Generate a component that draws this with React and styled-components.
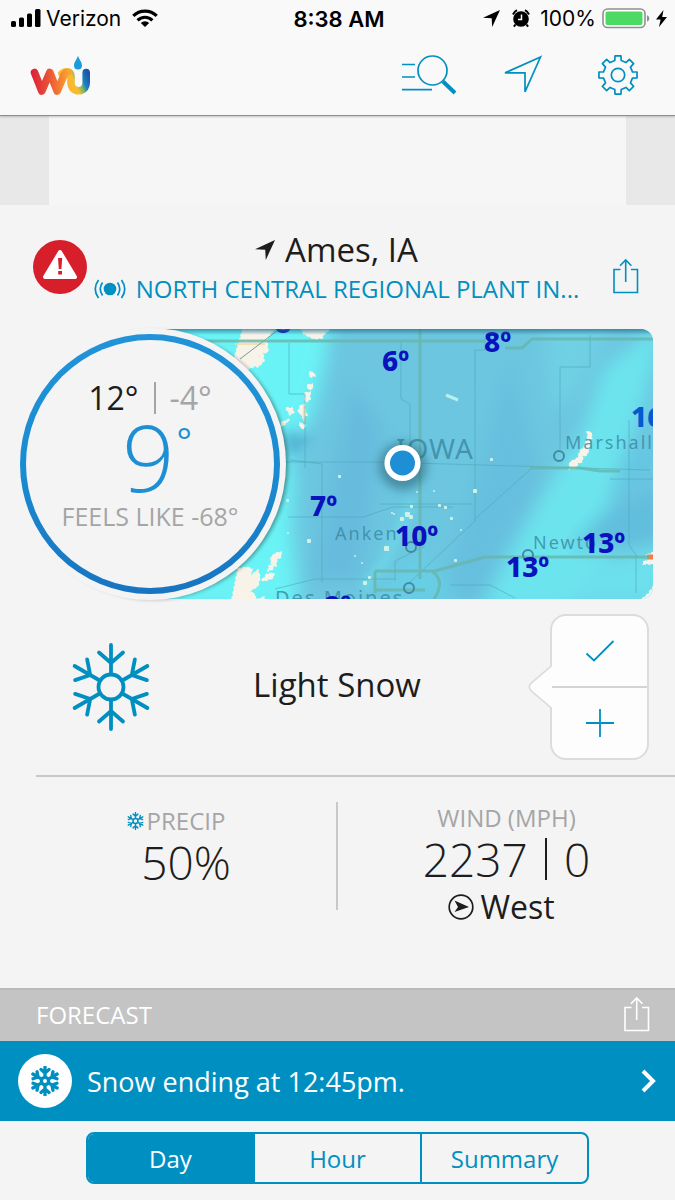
import React, { useState } from 'react';
import styled, { createGlobalStyle } from 'styled-components';

const colors = {
    bar: '#f9f9f9',
    background: '#f4f4f4',
    adSide: '#e8e8e8',
    blue: '#008fc1',
    dial: '#1e8fd5',
    text: '#1d1d20',
    muted: '#a5a5a5',
    line: '#c8c8c8',
    forecast: '#c4c4c4',
    alert: '#d71f2b',
};

const GlobalStyle = createGlobalStyle`
    * {
        box-sizing: border-box;
    }

    body {
        margin: 0;
        background-color: ${colors.background};
        color: ${colors.text};
        font-family: 'Open Sans', 'Noto Sans', sans-serif;
        font-weight: 400;
    }

    button {
        padding: 0;
        border: none;
        background: none;
        color: inherit;
        font: inherit;
        cursor: pointer;
    }

    svg {
        display: block;
        flex-shrink: 0;
    }
`;

const TopBar = styled.header`
    background-color: ${colors.bar};
    border-bottom: 1px solid #8e8e8e;
    box-shadow: 0 1px 2px rgba(0, 0, 0, 0.2);
    position: relative;
`;

const StatusBar = styled.div`
    display: grid;
    grid-template-columns: 1fr auto 1fr;
    align-items: center;
    height: 37px;
    padding: 0 8px 0 11px;
    color: #000;
    font-family: Inter, 'Liberation Sans', sans-serif;
    font-size: 21px;
`;

const StatusGroup = styled.div`
    display: flex;
    align-items: center;
    justify-content: ${({ $end }) => ($end ? 'flex-end' : 'flex-start')};
    gap: ${({ $end }) => ($end ? '6px' : '11px')};
`;

const StatusIcons = styled.span`
    display: flex;
    align-items: center;
    gap: 12px;
    padding-right: 4px;
`;

const Carrier = styled.span`
    margin-left: -6px;
`;

const Clock = styled.time`
    font-size: 22px;
    font-weight: 600;
`;

const NavBar = styled.nav`
    display: flex;
    align-items: center;
    justify-content: space-between;
    height: 78px;
    padding: 0 36px 2px 30px;
`;

const NavActions = styled.div`
    display: flex;
    align-items: center;
    gap: 46px;
`;

const NavButton = styled.button`
    padding-left: ${({ $spaced }) => ($spaced ? '8px' : '0')};
`;

const AdSlot = styled.div`
    height: 89px;
    border: solid ${colors.adSide};
    border-width: 0 49px;
    background-color: #f6f6f6;
`;

const Location = styled.section`
    display: flex;
    align-items: center;
    height: 123px;
    padding: 0 36px 0 33px;
`;

const LocationText = styled.div`
    flex: 1;
    min-width: 0;
    display: flex;
    flex-direction: column;
    align-items: center;
    gap: 5px;
    padding: 0 35px 0 9px;
`;

const City = styled.h1`
    display: flex;
    align-items: center;
    gap: 10px;
    margin: 0;
    font-size: 33px;
    font-weight: 400;
    line-height: 40px;
`;

const Station = styled.a`
    display: flex;
    align-items: center;
    gap: 10px;
    color: ${colors.blue};
    font-size: 24px;
    line-height: 28px;
    text-decoration: none;
    white-space: nowrap;
`;

const ShareButton = styled.button`
    padding-top: ${({ $low }) => ($low ? '18px' : '0')};
    color: ${({ $color }) => $color};
`;

const Hero = styled.section`
    display: flex;
    align-items: center;
    padding: 0 22px 0 14px;
`;

const Dial = styled.div`
    position: relative;
    z-index: 1;
    flex: 0 0 272px;
    height: 272px;
    margin-right: -136px;
    padding: 6px;
    border-radius: 50%;
    background-color: ${colors.background};
    box-shadow: 4px 1px 4px -2px rgba(0, 0, 0, 0.4);
`;

const DialRing = styled.div`
    display: flex;
    flex-direction: column;
    align-items: center;
    height: 100%;
    padding-top: 42px;
    border: 6px solid transparent;
    border-radius: 50%;
    background:
        linear-gradient(${colors.background}, ${colors.background}) padding-box,
        linear-gradient(#2193d9, #1a8dd2 50%, #1874c0) border-box;
`;

const HighLow = styled.div`
    display: flex;
    align-items: center;
    color: ${colors.muted};
    font-size: 32px;
    line-height: 32px;
`;

const High = styled.span`
    padding-right: 15px;
    border-right: 2px solid ${colors.muted};
    color: ${colors.text};
`;

const Low = styled.span`
    padding-left: 14px;
`;

const Temperature = styled.div`
    display: flex;
    color: ${colors.dial};
    font-size: 92px;
    font-weight: 300;
    line-height: 86px;
`;

const Degree = styled.sup`
    margin-right: -14px;
    padding-left: 2px;
    font-size: 36px;
    font-weight: 400;
    line-height: 54px;
`;

const FeelsLike = styled.div`
    color: ${colors.muted};
    font-size: 25px;
    line-height: 32px;
`;

const MapLink = styled.a`
    flex: 1;
    height: 270px;
    overflow: hidden;
    border-radius: 0 12px 12px 0;

    svg {
        width: 100%;
        height: 100%;
    }
`;

const Conditions = styled.section`
    display: flex;
    align-items: center;
    padding: 14px 26px 15px 70px;
`;

const Phrase = styled.h2`
    flex: 1;
    margin: 0;
    padding: 0 6px 6px 0;
    font-size: 33px;
    font-weight: 400;
    text-align: center;
`;

const Vote = styled.div`
    display: flex;
    align-items: center;
`;

const VoteBox = styled.div`
    display: flex;
    flex-direction: column;
    width: 99px;
    height: 146px;
    margin-left: -2px;
    border: 2px solid #dcdcdc;
    border-radius: 16px;
    background-color: #fdfdfd;
`;

const VoteButton = styled.button`
    display: flex;
    flex: 1;
    align-items: center;
    justify-content: center;
    color: ${colors.blue};

    & + & {
        border-top: 2px solid #d4d4d4;
    }
`;

const PointerSvg = styled.svg`
    position: relative;
    z-index: 1;
`;

const Details = styled.section`
    display: grid;
    grid-template-columns: 302px 1fr;
    margin-left: 36px;
    padding: 25px 0 61px;
    border-top: 2px solid ${colors.line};
`;

const Detail = styled.div`
    display: flex;
    flex-direction: column;
    align-items: center;
    height: 125px;
`;

const DetailDivided = styled(Detail)`
    height: 108px;
    padding-top: 3px;
    border-right: 2px solid ${colors.line};
`;

const DetailLabel = styled.div`
    display: flex;
    align-items: center;
    gap: 3px;
    margin-right: ${({ $icon }) => ($icon ? '20px' : '0')};
    color: ${colors.muted};
    font-size: 24px;
    line-height: 32px;

    svg {
        color: ${colors.blue};
    }
`;

const DetailValue = styled.div`
    display: flex;
    align-items: center;
    gap: 17px;
    font-size: 46px;
    font-weight: 300;
    line-height: 50px;
`;

const ValueDivider = styled.span`
    width: 2px;
    height: 42px;
    background-color: ${colors.text};
`;

const WindDirection = styled.div`
    display: flex;
    align-items: center;
    gap: 6px;
    margin-right: 10px;
    font-size: 32px;
    line-height: 46px;
`;

const ForecastBar = styled.section`
    display: flex;
    align-items: center;
    justify-content: space-between;
    height: 53px;
    padding: 0 25px 3px 36px;
    border-top: 2px solid #b9b9b9;
    background-color: ${colors.forecast};
    color: #fff;
`;

const ForecastTitle = styled.h2`
    margin: 0;
    font-size: 24px;
    font-weight: 400;
`;

const SnowNotice = styled.a`
    display: flex;
    align-items: center;
    gap: 15px;
    height: 80px;
    padding: 0 19px 0 18px;
    background-color: ${colors.blue};
    color: #fff;
    font-size: 27px;
    text-decoration: none;
`;

const NoticeIcon = styled.span`
    display: flex;
    align-items: center;
    justify-content: center;
    width: 54px;
    height: 54px;
    border-radius: 50%;
    background-color: #fff;
    color: ${colors.blue};
`;

const NoticeText = styled.span`
    flex: 1;
`;

const Tabs = styled.div`
    display: flex;
    margin: 11px 86px 16px;
    border: 2px solid ${colors.blue};
    border-radius: 8px;
    overflow: hidden;
`;

const Tab = styled.button`
    flex: 1;
    height: 48px;
    background-color: ${({ $active }) => ($active ? colors.blue : 'transparent')};
    color: ${({ $active }) => ($active ? '#fff' : colors.blue)};
    font-size: 24px;

    & + & {
        border-left: 2px solid ${colors.blue};
    }
`;

const SignalIcon = () => (
    <svg width="30" height="19" viewBox="0 0 30 19">
        <rect x="0" y="12" width="5" height="6" rx="1.5" />
        <rect x="8" y="8.500" width="5" height="9.500" rx="1.500" />
        <rect x="16" y="4.500" width="5" height="13.500" rx="1.500" />
        <rect x="24" y="0" width="5.500" height="18" rx="1.500" />
    </svg>
);

const WifiIcon = () => (
    <svg width="26" height="19" viewBox="0 0 26 19" fill="none" stroke="#000" strokeWidth="3.200">
        <path d="M1.300 6.900a16.600 16.600 0 0 1 23.400 0" />
        <path d="M5.600 11.300a10.500 10.500 0 0 1 14.800 0" />
        <path d="M13 18l-4.200-4.100a6 6 0 0 1 8.400 0z" fill="#000" stroke="none" />
    </svg>
);

const LocationArrow = ({ size = 17 }) => (
    <svg width={size} height={size} viewBox="0 0 18 18" fill="currentColor">
        <path d="M18 0L0 8.300l9.200.5L9.700 18z" />
    </svg>
);

const AlarmIcon = () => (
    <svg width="18" height="19" viewBox="0 0 18 19">
        <circle cx="9" cy="10" r="7.800" />
        <path d="M1 5.500A9 9 0 0 1 5 1.200M13 1.200a9 9 0 0 1 4 4.300M3.500 15.500l-1.600 2.200M14.500 15.500l1.600 2.200" stroke="#000" strokeWidth="2" fill="none" />
        <path d="M9.500 5.500v5H6" stroke="#fff" strokeWidth="1.500" fill="none" />
    </svg>
);

const BatteryIcon = () => (
    <svg width="48" height="21" viewBox="0 0 48 21">
        <rect x="1" y="1" width="42" height="18.500" rx="4.500" fill="#fff" stroke="#8f8f8f" strokeWidth="1.600" />
        <rect x="3.500" y="3.500" width="37" height="13.500" rx="2" fill="#4cd964" />
        <path d="M45 7.200c3 1 3 5.400 0 6.400z" fill="#8f8f8f" />
    </svg>
);

const BoltIcon = () => (
    <svg width="11" height="17" viewBox="0 0 11 17">
        <path d="M7.500 0L0 9.500h4.600L3 17l8-10H6.200z" />
    </svg>
);

const LogoIcon = () => (
    <svg width="60" height="42" viewBox="30 50 60 42" role="img" aria-label="Weather Underground">
        <defs>
            <linearGradient id="warm" gradientUnits="userSpaceOnUse" x1="31" y1="0" x2="68" y2="0">
                <stop offset="0" stopColor="#d9203a" />
                <stop offset="0.450" stopColor="#e94f35" />
                <stop offset="0.800" stopColor="#f58232" />
                <stop offset="1" stopColor="#f9a52f" />
            </linearGradient>
            <linearGradient id="cool" gradientUnits="userSpaceOnUse" x1="66" y1="80" x2="88" y2="70">
                <stop offset="0" stopColor="#fbb52f" />
                <stop offset="0.350" stopColor="#f3bd30" />
                <stop offset="0.550" stopColor="#7fb560" />
                <stop offset="0.700" stopColor="#1c83c5" />
                <stop offset="1" stopColor="#1c57a8" />
            </linearGradient>
        </defs>
        <g fill="none" strokeWidth="7.600" strokeLinecap="round" strokeLinejoin="round">
            <path d="M62 69.500C67 66 71 68 71 73v5.500c0 11 15.200 11 15.200 0V68.500" stroke="url(#cool)" />
            <path d="M34.500 68.500l7.300 18.500 8-18.500 7.400 18.500 6.300-14.500c1-2.500 2-4 4-4.200" stroke="url(#warm)" />
        </g>
        <path d="M78 51.500c1 4 4 6.500 4 10a4 4 0 0 1-8 0c0-3.500 3-6 4-10z" fill="#1b9dd9" />
    </svg>
);

const SearchIcon = () => (
    <svg width="55" height="42" viewBox="0 0 55 42" fill="none" stroke={colors.blue} strokeWidth="1.700">
        <path d="M0 10.500h13M0 23h13M0 35.700h30" />
        <circle cx="30.500" cy="16.500" r="14.500" />
        <path d="M41 27.500l12 11.500" strokeWidth="4" />
    </svg>
);

const NavigateIcon = () => (
    <svg width="40" height="40" viewBox="0 0 40 40" fill="none" stroke={colors.blue} strokeWidth="1.700">
        <path d="M37.500 2L2 17.800h20v19z" />
    </svg>
);

const GearIcon = () => {
    const teeth = [];
    for (let i = 0; i < 8; i += 1) {
        [[-12.500, 14.800], [-9, 19.300], [9, 19.300], [12.500, 14.800]].forEach(([deg, r]) => {
            const angle = ((i * 45 + deg) * Math.PI) / 180;
            teeth.push(`${(21 + r * Math.sin(angle)).toFixed(2)},${(21 - r * Math.cos(angle)).toFixed(2)}`);
        });
    }
    return (
        <svg width="42" height="42" viewBox="0 0 42 42" fill="none" stroke={colors.blue} strokeWidth="1.700" strokeLinejoin="round">
            <polygon points={teeth.join(' ')} />
            <circle cx="21" cy="21" r="6.700" />
        </svg>
    );
};

const AlertIcon = () => (
    <svg width="54" height="54" viewBox="0 0 54 54">
        <circle cx="27" cy="27" r="27" fill={colors.alert} />
        <path d="M27 12l15 25H12z" fill="#fff" stroke="#fff" strokeWidth="4" strokeLinejoin="round" />
        <path d="M25 18h4.200l-.8 11h-2.600zM25.200 31h3.800v3.500h-3.800z" fill={colors.alert} />
    </svg>
);

const BroadcastIcon = () => (
    <svg width="32" height="20" viewBox="0 0 32 20" fill="none" stroke="currentColor" strokeWidth="1.700">
        <circle cx="16" cy="10" r="6.300" fill="currentColor" stroke="none" />
        <path d="M8.500 3.500q-4.500 6.500 0 13M4.500 1q-6.500 9 0 18M23.500 3.500q4.500 6.500 0 13M27.500 1q6.500 9 0 18" />
    </svg>
);

const ShareIcon = () => (
    <svg width="27" height="36" viewBox="0 0 27 36" fill="none" stroke="currentColor" strokeWidth="1.600">
        <path d="M8.500 11.500H2v23h23.500v-23H19M13.700 24V2M8 7.700L13.700 2l5.700 5.700" />
    </svg>
);

const Snowflake = ({ width, height, stroke = 3.800, hub = 12.500 }) => (
    <svg width={width} height={height} viewBox="-41 -45 82 90" fill="none" stroke="currentColor" strokeWidth={stroke} strokeLinecap="round">
        <circle r={hub} />
        {[0, 60, 120, 180, 240, 300].map((deg) => (
            <path key={deg} d="M0-13V-42M-12-34.500L0-24l12-10.500" transform={`rotate(${deg})`} />
        ))}
    </svg>
);

const ConditionIcon = styled.div`
    color: ${colors.blue};
`;

const WestIcon = () => (
    <svg width="26" height="26" viewBox="0 0 26 26">
        <circle cx="13" cy="13" r="11.800" fill="none" stroke={colors.text} strokeWidth="1.700" />
        <path d="M6.500 6.500L21 13 6.500 18l3.500-5z" fill={colors.text} />
    </svg>
);

const counties = `M289 343v51h16v74M150 462h230l270 8M322 464v118M288 517h75l30-10h60M401 341v58l9 5v57M475
    367v-17h10v-12M475 367v152M560 449v-82h30v-32M380 504h92M476 520l-66 62M474 520l58-52M629 420v125l7 10v38M610
    479h45M275 589l40-10h80M450 585h40l25 13M290 460l32 4M395 581v-20l30-15`;

const roads = `M150 341h335M505 348h17l10-9h121M420 329v250M375 571v22M375 571h60l50-14h165M432 571q14 10 2 28M375
    590h50M530 468h50l20 3h20`;

const snowPatches = [
    'M243 329l30 1-6 9 1 13-5 1 1 8-6 6-3-1-7 3-6 6-3 1-6-14z',
    'M301 329h29l-6 5-2 4-7 1-5-2-6-3z',
    'M232 599l6-30 9-2 5 2-1 7 4-4 3-2 2 7-2 9-8 5 5 4 1 5 8-3 3 7z',
    'M262 580l5-6 7-1-1 5-9 3zM276 553l5-1v5l-4 2-1 7-5-3v-6zM269 566l5-2-1 5-5 2z',
    'M310 372l4 1 1 3-4 1-2-2zM307 385l5-1 1 4-4 2zM305 393l5-1v8l-5 2zM300 406l5-2 0 6 2 5-4 3-2-4-3-2zM286 408l6 0 2 4-4 3zM282 422l8-3-6 6-4 2zM300 423l5 2-1 4-4-2z',
    'M587 432l4 0 1 6-3 1 1 7-3 9-4 1-1 6-4 1-2 5-7 1 1-7 8-4 2-7 4-4 2-5 2-6z',
    'M654 552l-7 3 1 5-5 2 0 2h12zM642 599l6-5 5-7v12z',
];

const specks = [
    [338, 475, 3], [286, 499, 3], [287, 532, 2], [307, 539, 4], [384, 546, 5], [354, 555, 2], [361, 562, 2],
    [393, 513, 2], [400, 517, 4], [405, 512, 5], [409, 515, 4], [410, 505, 3], [433, 490, 2], [416, 491, 2],
    [438, 504, 3], [444, 506, 3], [450, 517, 3], [460, 529, 2], [473, 489, 4], [490, 458, 3], [454, 559, 3],
    [363, 581, 4], [368, 576, 3], [391, 512, 2],
];

const places = [
    { name: 'IOWA', x: 396, y: 459, size: 28, spacing: 1 },
    { name: 'Marshallt', x: 565, y: 449, size: 18, spacing: 2 },
    { name: 'Anken', x: 335, y: 540, size: 18, spacing: 2 },
    { name: 'Newto', x: 533, y: 549, size: 18, spacing: 2 },
    { name: 'Des Moines', x: 275, y: 605, size: 20, spacing: 2 },
];

const readings = [
    { value: '6º', x: 382, y: 371 },
    { value: '8º', x: 484, y: 352 },
    { value: '7º', x: 310, y: 516 },
    { value: '10º', x: 395, y: 546 },
    { value: '13º', x: 506, y: 577 },
    { value: '13º', x: 582, y: 553 },
    { value: '16º', x: 631, y: 427, color: '#055ad2' },
    { value: '8º', x: 275, y: 333 },
    { value: '8º', x: 324, y: 616 },
];

const RadarMap = () => (
    <svg viewBox="150 329 503 270" preserveAspectRatio="xMidYMid slice">
        <defs>
            <filter id="soft" x="-50%" y="-50%" width="200%" height="200%">
                <feGaussianBlur stdDeviation="9" />
            </filter>
            <filter id="halo" x="-50%" y="-50%" width="200%" height="200%">
                <feGaussianBlur stdDeviation="5" />
            </filter>
            <linearGradient id="topShade" x1="0" y1="0" x2="0" y2="1">
                <stop offset="0" stopColor="#20708e" stopOpacity="0.700" />
                <stop offset="1" stopColor="#20708e" stopOpacity="0" />
            </linearGradient>
        </defs>
        <rect x="150" y="329" width="503" height="270" fill="#6cc6e0" />
        <g filter="url(#soft)">
            <path d="M130 300h202l-6 60-12 50-18 40-4 80 8 80H130z" fill="#6af3f6" />
            <path d="M283 425h16l-2 40-8 10z" fill="#62b9df" opacity="0.500" />
            <path d="M665 320l-62 50-20 60-25 40-52 90-25 50h95l35-60 0-60 30-80z" fill="#6ce4ee" />
            <path d="M665 420l-45 40-12 40 57-30z" fill="#66c6e2" />
            <path d="M665 485l-60 25-35 40 95-10z" fill="#62bedd" />
            <path d="M665 545l-70 20-30 40h100z" fill="#6ce0ed" />
            <path d="M510 360l-25 90-45 150h40l60-120z" fill="#66bfde" />
            <path d="M545 320h70l-40 75-25 15z" fill="#70d0e4" />
            <path d="M350 380l-40 200h50l25-150z" fill="#66bcdd" />
            <path d="M420 550l-50 50h90z" fill="#66cfe6" />
        </g>
        <path d="M285 435l8-4 6 7 9-3 5 6-10 4-7 9-8-2z" fill="#489fc4" opacity="0.600" filter="url(#halo)" />
        <path d="M412 500l-12 30-18 35-20 25" stroke="#70e9ef" strokeWidth="7" fill="none" opacity="0.600" filter="url(#halo)" />
        <g fill="#f8f3e9">
            {snowPatches.map((d) => (
                <path key={d} d={d} stroke="#f8f3e9" strokeWidth="1.500" strokeDasharray="3 2" />
            ))}
        </g>
        <path d="M446 395l12 5" stroke="#b7f1ee" strokeWidth="3" />
        <path d="M235 341h32M235 344h30M304 405v16" stroke="#f4d79d" strokeWidth="1.500" />
        <path d="M647 557h6" stroke="#f17e44" strokeWidth="5" />
        <path d="M240 359l42-32" stroke="#7f9899" strokeWidth="1" />
        <path d={counties} fill="none" stroke="#4ca8b8" strokeWidth="1" opacity="0.600" />
        <path d={roads} fill="none" stroke="#66b5ab" strokeWidth="3" opacity="0.800" />
        <g fill="#cff2e8">
            {specks.map(([x, y, size]) => (
                <rect key={`${x}-${y}`} x={x} y={y} width={size} height={size} rx="1" />
            ))}
        </g>
        <g fill="none" stroke="#4589a1" strokeWidth="2">
            <circle cx="559" cy="456" r="5" />
            <circle cx="528" cy="555" r="5" />
            <circle cx="411" cy="547" r="5" />
            <circle cx="409" cy="588" r="5" />
        </g>
        <g fill="#3a86a2" fillOpacity="0.800" fontFamily="'Noto Sans', sans-serif">
            {places.map(({ name, x, y, size, spacing }) => (
                <text key={name} x={x} y={y} fontSize={size} letterSpacing={spacing}>{name}</text>
            ))}
        </g>
        <g fontFamily="'Noto Sans', sans-serif" fontSize="28" fontWeight="800">
            {readings.map(({ value, x, y, color = '#0a12bd' }) => (
                <text key={`${x}-${y}`} x={x} y={y} fill={color}>{value}</text>
            ))}
        </g>
        <circle cx="403" cy="466" r="24" fill="#24566b" opacity="0.500" filter="url(#halo)" />
        <circle cx="402.500" cy="463" r="15.300" fill={colors.dial} stroke="#fff" strokeWidth="5.600" />
        <rect x="150" y="329" width="503" height="6" fill="url(#topShade)" />
    </svg>
);

const PointerIcon = () => (
    <PointerSvg width="24" height="46" viewBox="0 0 24 46">
        <path d="M24 1.500L3.500 18.800q-4.500 4.200 0 8.400L24 44.500" fill="#fdfdfd" stroke="#dcdcdc" strokeWidth="1.700" />
    </PointerSvg>
);

const CheckIcon = () => (
    <svg width="30" height="24" viewBox="0 0 30 24" fill="none" stroke="currentColor" strokeWidth="1.800">
        <path d="M1.500 14.500l7.500 7L28.500 2" />
    </svg>
);

const PlusIcon = () => (
    <svg width="30" height="30" viewBox="0 0 30 30" stroke="currentColor" strokeWidth="1.800">
        <path d="M15 1v28M1 15h28" />
    </svg>
);

const ChevronIcon = () => (
    <svg width="15" height="24" viewBox="0 0 15 24" fill="none" stroke="currentColor" strokeWidth="4">
        <path d="M2 2l10 10L2 22" />
    </svg>
);

const tabs = ['Day', 'Hour', 'Summary'];

/**
 * Current conditions screen with the forecast switcher.
 *
 * @returns {JSX.Element} The weather screen.
 */
const App = () => {
    const [activeTab, setActiveTab] = useState('Day');

    return (
        <>
            <GlobalStyle />
            <TopBar>
                <StatusBar>
                    <StatusGroup>
                        <SignalIcon />
                        <Carrier>Verizon</Carrier>
                        <WifiIcon />
                    </StatusGroup>
                    <Clock>8:38 AM</Clock>
                    <StatusGroup $end>
                        <StatusIcons>
                            <LocationArrow />
                            <AlarmIcon />
                        </StatusIcons>
                        <span>100%</span>
                        <BatteryIcon />
                        <BoltIcon />
                    </StatusGroup>
                </StatusBar>
                <NavBar>
                    <LogoIcon />
                    <NavActions>
                        <NavButton type="button" aria-label="Search"><SearchIcon /></NavButton>
                        <NavButton type="button" aria-label="Locate me"><NavigateIcon /></NavButton>
                        <NavButton type="button" aria-label="Settings" $spaced><GearIcon /></NavButton>
                    </NavActions>
                </NavBar>
            </TopBar>

            <AdSlot />

            <main>
                <Location>
                    <button type="button" aria-label="Weather alert"><AlertIcon /></button>
                    <LocationText>
                        <City>
                            <LocationArrow size={20} />
                            Ames, IA
                        </City>
                        <Station href="#station">
                            <BroadcastIcon />
                            NORTH CENTRAL REGIONAL PLANT IN...
                        </Station>
                    </LocationText>
                    <ShareButton type="button" aria-label="Share" $low $color={colors.blue}>
                        <ShareIcon />
                    </ShareButton>
                </Location>

                <Hero>
                    <Dial>
                        <DialRing>
                            <HighLow>
                                <High>12°</High>
                                <Low>-4°</Low>
                            </HighLow>
                            <Temperature>
                                9<Degree>°</Degree>
                            </Temperature>
                            <FeelsLike>FEELS LIKE -68°</FeelsLike>
                        </DialRing>
                    </Dial>
                    <MapLink href="#map" aria-label="Radar map">
                        <RadarMap />
                    </MapLink>
                </Hero>

                <Conditions>
                    <ConditionIcon>
                        <Snowflake width={82} height={90} />
                    </ConditionIcon>
                    <Phrase>Light Snow</Phrase>
                    <Vote>
                        <PointerIcon />
                        <VoteBox>
                            <VoteButton type="button" aria-label="Confirm"><CheckIcon /></VoteButton>
                            <VoteButton type="button" aria-label="Add report"><PlusIcon /></VoteButton>
                        </VoteBox>
                    </Vote>
                </Conditions>

                <Details>
                    <DetailDivided>
                        <DetailLabel $icon>
                            <Snowflake width={17} height={18} stroke={7} />
                            PRECIP
                        </DetailLabel>
                        <DetailValue>50%</DetailValue>
                    </DetailDivided>
                    <Detail>
                        <DetailLabel>WIND (MPH)</DetailLabel>
                        <DetailValue>
                            2237
                            <ValueDivider />
                            0
                        </DetailValue>
                        <WindDirection>
                            <WestIcon />
                            West
                        </WindDirection>
                    </Detail>
                </Details>

                <ForecastBar>
                    <ForecastTitle>FORECAST</ForecastTitle>
                    <ShareButton type="button" aria-label="Share forecast" $color="#fff">
                        <ShareIcon />
                    </ShareButton>
                </ForecastBar>
                <SnowNotice href="#notice">
                    <NoticeIcon><Snowflake width={28} height={30} stroke={10} hub={11} /></NoticeIcon>
                    <NoticeText>Snow ending at 12:45pm.</NoticeText>
                    <ChevronIcon />
                </SnowNotice>
                <Tabs>
                    {tabs.map((tab) => (
                        <Tab
                            key={tab}
                            type="button"
                            $active={tab === activeTab}
                            onClick={() => setActiveTab(tab)}
                        >
                            {tab}
                        </Tab>
                    ))}
                </Tabs>
            </main>
        </>
    );
};

export default App;
